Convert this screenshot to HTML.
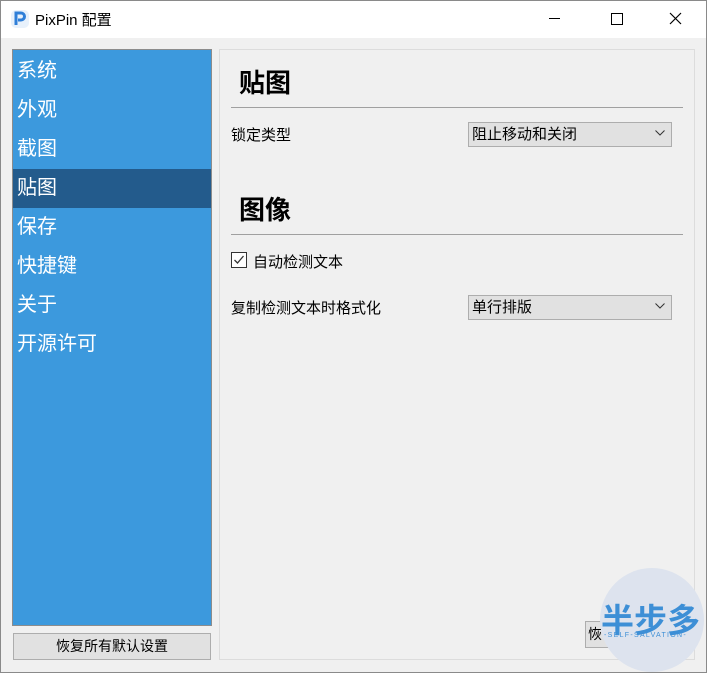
<!DOCTYPE html>
<html><head><meta charset="utf-8"><style>
body{margin:0;width:707px;height:673px;overflow:hidden;background:#f0f0f0;font-family:"Liberation Sans","Noto Sans CJK SC",sans-serif;position:relative}
.a{position:absolute}
.win{position:absolute;left:0;top:0;width:705px;height:671px;border:1px solid #8a8a8a}
.title{left:1px;top:1px;width:705px;height:37px;background:#fff}
.side{left:12px;top:49px;width:198px;height:575px;background:#3c99dd;border:1px solid #8c8c8c}
.item{position:absolute;left:0;width:198px;height:39px;color:#fff;font-size:20px;line-height:39px;text-indent:4px}
.panel{left:219px;top:49px;width:474px;height:609px;border:1px solid #dcdcdc}
.h{font-size:26px;font-weight:bold;color:#000}
.hr{height:1px;background:#a0a0a0;left:231px;width:452px}
.lbl{font-size:15px;color:#000}
.combo{left:468px;width:202px;height:23px;background:#e1e1e1;border:1px solid #adadad;font-size:15px;line-height:23px;text-indent:3px}
.btn{background:#e1e1e1;border:1px solid #adadad;font-size:14px;text-align:center}
</style></head><body>
<div class="win"></div>
<div class="a title"></div>
<svg class="a" style="left:10px;top:9px" width="20" height="20" viewBox="0 0 20 20"><rect x="1" y="1" width="18" height="18" rx="5" fill="#e8f1fb"/><path d="M6 16V4h5a3.5 3.5 0 0 1 0 7H8" stroke="#2f7fd8" stroke-width="3" fill="none"/></svg>
<div class="a" style="left:35px;top:9px;font-size:15px">PixPin 配置</div>
<div class="a" style="left:549px;top:18px;width:11px;height:1px;background:#000"></div>
<div class="a" style="left:611px;top:13px;width:10px;height:10px;border:1px solid #000"></div>
<svg class="a" style="left:669px;top:12px" width="13" height="13"><path d="M1 1L12 12M12 1L1 12" stroke="#000" stroke-width="1.2"/></svg>
<div class="a side">
<div class="item" style="top:2px">系统</div>
<div class="item" style="top:41px">外观</div>
<div class="item" style="top:80px">截图</div>
<div class="item" style="top:119px;background:#235b8c">贴图</div>
<div class="item" style="top:158px">保存</div>
<div class="item" style="top:197px">快捷键</div>
<div class="item" style="top:236px">关于</div>
<div class="item" style="top:275px">开源许可</div>
</div>
<div class="a btn" style="left:13px;top:633px;width:196px;height:25px;line-height:25px">恢复所有默认设置</div>
<div class="a panel"></div>
<div class="a h" style="left:239px;top:63px">贴图</div>
<div class="a hr" style="top:107px"></div>
<div class="a lbl" style="left:231px;top:124px">锁定类型</div>
<div class="a combo" style="top:122px">阻止移动和关闭</div>
<svg class="a" style="left:655px;top:130px" width="10" height="6"><path d="M0.5 0.5L5 5L9.5 0.5" stroke="#333" fill="none"/></svg>
<div class="a h" style="left:239px;top:190px">图像</div>
<div class="a hr" style="top:234px"></div>
<div class="a" style="left:231px;top:252px;width:14px;height:14px;border:1px solid #333;background:#fff"></div>
<svg class="a" style="left:232px;top:253px" width="14" height="14"><path d="M2.5 7L5.5 10L11.5 3" stroke="#333" stroke-width="1.3" fill="none"/></svg>
<div class="a lbl" style="left:253px;top:251px">自动检测文本</div>
<div class="a lbl" style="left:231px;top:297px">复制检测文本时格式化</div>
<div class="a combo" style="top:295px">单行排版</div>
<svg class="a" style="left:655px;top:303px" width="10" height="6"><path d="M0.5 0.5L5 5L9.5 0.5" stroke="#333" fill="none"/></svg>
<div class="a btn" style="left:585px;top:621px;width:60px;height:25px;line-height:25px;text-align:left;text-indent:2px">恢</div>
<div class="a" style="left:600px;top:568px;width:104px;height:104px;border-radius:50%;background:#dde3ee"></div>
<div class="a" style="left:601px;top:594px;font-size:33px;font-weight:bold;color:#3d8fd6;letter-spacing:0px">半步多</div>
<div class="a" style="left:604px;top:632px;font-size:7px;color:#3d8fd6;letter-spacing:1.3px">-SELF-SALVATION-</div>
</body></html>
